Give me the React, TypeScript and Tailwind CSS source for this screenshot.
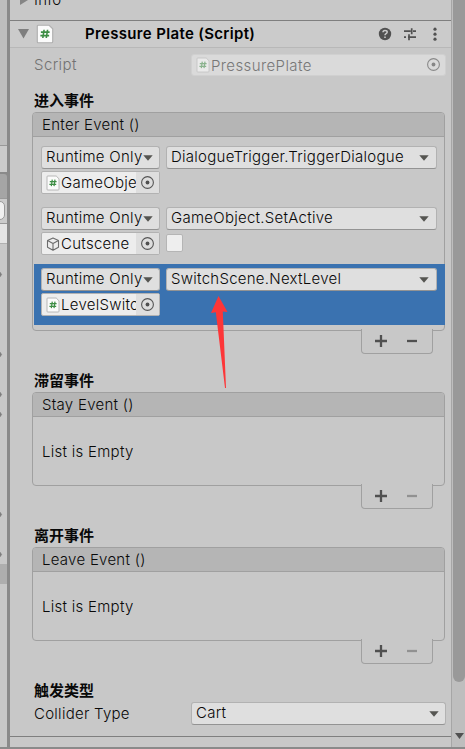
import type { ReactNode } from "react";

function Caret({ className = "" }: { className?: string }) {
  return (
    <svg className={`shrink-0 ${className}`} width="10" height="6" viewBox="0 0 10 6">
      <path d="M0.3 0.3H9.7L5 5.8Z" fill="#555551" />
    </svg>
  );
}

function ScriptIcon({ large = false }: { large?: boolean }) {
  return (
    <svg className="shrink-0" width={large ? 18 : 14} height={large ? 20 : 16} viewBox="0 0 14 16" preserveAspectRatio="none">
      <path d="M1.8 1H10.2L13 3.8V14.2Q13 15 12.2 15H1.8Q1 15 1 14.2V1.8Q1 1 1.8 1Z" fill="#fbfbfb" stroke="#b0b0b0" strokeWidth="0.9" />
      <path d="M6.3 4.6L5.3 11.2M9 4.6L8 11.2M3.8 6.5H10.6M3.4 9.3H10.2" stroke="#3e8e45" strokeWidth="1.25" fill="none" />
    </svg>
  );
}

function CubeIcon() {
  return (
    <svg className="shrink-0" width="14" height="16" viewBox="0 0 14 16">
      <path d="M7 2L12.5 4.6V11.2L7 14.2L1.5 11.2V4.6ZM1.5 4.6L7 7.4L12.5 4.6M7 7.4V14.2" fill="none" stroke="#6c6c6c" strokeWidth="1.1" strokeLinejoin="round" />
    </svg>
  );
}

function Target() {
  return (
    <svg className="shrink-0" width="14" height="14" viewBox="0 0 14 14">
      <circle cx="6.5" cy="6.5" r="5.9" fill="none" stroke="#555" strokeWidth="1.1" />
      <circle cx="6.5" cy="6.5" r="1.9" fill="#505050" />
    </svg>
  );
}

function Dropdown({ label, className }: { label: string; className: string }) {
  return (
    <div className={`flex items-center rounded-[3px] border border-[#b2b2b2] border-b-[#939393] bg-[#dfdfdf] pl-1 ${className}`}>
      <span className="mb-px min-w-0 flex-1 overflow-hidden whitespace-nowrap leading-5">{label}</span>
      <Caret className="mr-[6px]" />
    </div>
  );
}

function ObjectField({ icon, label }: { icon: ReactNode; label: string }) {
  return (
    <div className="flex h-[23px] w-[119px] items-stretch overflow-hidden rounded-[2px] border border-[#b2b2b2] bg-[#ededed]">
      <div className="flex w-[94px] items-center overflow-hidden pl-1 whitespace-nowrap">
        {icon}
        <span className="ml-[1px] mt-px leading-5">{label}</span>
      </div>
      <div className="flex flex-1 items-center bg-[#dedede] pl-[5px]">
        <Target />
      </div>
    </div>
  );
}

function EventRow({ icon, object, method, checkbox = false, selected = false }: { icon: ReactNode; object: string; method: string; checkbox?: boolean; selected?: boolean }) {
  return (
    <div className={`ml-px h-[61px] pl-[7px] pt-1 ${selected ? "-mr-px bg-[#3a72b0]" : ""}`}>
      <div className="flex gap-[6px]">
        <Dropdown label="Runtime Only" className="h-[23px] w-[119px]" />
        <Dropdown label={method} className="h-[23px] w-[271px] [&>svg]:mr-[7px]" />
      </div>
      <div className="mt-[2px] flex gap-[6px]">
        <ObjectField icon={icon} label={object} />
        {checkbox && <span className="mt-[2px] h-[18px] w-[17px] rounded-[2px] border border-[#b5b5b5] bg-[#eeeeee]" />}
      </div>
    </div>
  );
}

function EventList({ heading, title, children }: { heading: string; title: string; children?: ReactNode }) {
  return (
    <section>
      <h3 className="ml-6 h-[20px] text-[15px] font-bold leading-[22px] tracking-normal">{heading}</h3>
      <div className="ml-[22px] mt-[2px] w-[413px] rounded-[4px] border border-[#a0a0a0]">
        <div className="h-6 rounded-t-[3px] border-b border-[#a0a0a0] bg-[#b5b5b5] pl-[9px] leading-[24px]">{title}</div>
        {children ? <div className="h-[193px] pt-[5px]">{children}</div> : <div className="h-[68px] pl-[9px] pt-[25px] leading-[20px]">List is Empty</div>}
      </div>
      <div className="relative -mt-[2px] ml-[351px] flex h-[25px] w-[72px] items-center rounded-b-[4px] border border-t-0 border-[#a0a0a0] bg-[#c8c8c8] pl-[13px]">
        <svg width="12" height="12" viewBox="0 0 12 12">
          <path d="M0 6H12M6 0V12" stroke="#505050" strokeWidth="2.3" />
        </svg>
        <svg className="ml-5" width="10" height="12" viewBox="0 0 10 12">
          <path d="M0 6H10" stroke={children ? "#505050" : "#919191"} strokeWidth="2.3" />
        </svg>
      </div>
    </section>
  );
}

function Hierarchy() {
  return (
    <aside className="relative flex w-[7px] shrink-0 flex-col overflow-hidden bg-[#c8c8c8]">
      <div className="h-[146px] shrink-0 border-b border-[#999] bg-[#bebebe]" />
      <div className="h-[26px] shrink-0 bg-[#cbcbcb]" />
      <div className="h-[26px] shrink-0 bg-[#8a8a8a] pt-[2px]">
        <div className="h-6 rounded-tr-[3px] bg-[#a5a5a5]" />
      </div>
      <div className="h-[26px] shrink-0 border-y border-[#999] bg-[#cbcbcb] pt-[2px]">
        <div className="-ml-2 h-[19px] w-[13px] rounded-r-[5px] border border-[#999] bg-[#f0f0f0]" />
      </div>
      <div className="h-[20px] shrink-0 border-b border-[#b0b0b0] bg-[#e4e4e4]" />
      <div className="h-[320px] shrink-0" />
      <div className="h-5 shrink-0 bg-[#aeaeae]" />
      <svg className="absolute left-0 top-0" width="7" height="749">
        {[274.5, 354.5, 394.5, 414.5, 514.5, 554.5].map((y) => (
          <path key={y} d={`M0 ${y - 2.2}L1.6 ${y}L0 ${y + 2.2}Z`} fill="#7e7e7e" stroke="#7e7e7e" strokeWidth="0.8" />
        ))}
      </svg>
    </aside>
  );
}

export default function App() {
  return (
    <div className="relative flex h-[749px] w-[465px] flex-col overflow-hidden bg-[#c8c8c8] font-['Inter','Noto_Sans_CJK_SC',sans-serif] text-[15px] font-[360] tracking-[0.27px] text-[#090909]">
      <div className="flex h-[747px] shrink-0">
        <Hierarchy />
        <div className="w-[3px] shrink-0 bg-[#8a8a8a]" />
        <main className="w-[441px] shrink-0">
          <div className="flex h-5 overflow-hidden">
            <svg className="ml-[10px] -mt-[5px]" width="8" height="10">
              <path d="M0 0L8 5L0 10Z" fill="#858585" />
            </svg>
            <span className="-mt-[10px] ml-[6px] h-5 leading-5">Info</span>
          </div>
          <header className="flex h-7 items-center border-b border-t border-b-[#b8b8b8] border-t-[#7f7f7f] bg-[#cbcbcb]">
            <svg className="ml-2 shrink-0" width="11" height="10">
              <path d="M0 0H11L5.5 9.5Z" fill="#7e7e7e" />
            </svg>
            <span className="ml-[7px]"><ScriptIcon large /></span>
            <h2 className="ml-[31px] w-[293px] pt-px font-semibold tracking-[0.34px] text-black">Pressure Plate (Script)</h2>
            <svg width="64" height="16" viewBox="0 0 64 16">
              <circle cx="7" cy="8" r="6.2" fill="#515151" />
              <path d="M5 6.3Q5 4.5 7 4.5Q9.2 4.5 9.2 6.1Q9.2 7 8.1 7.6Q7 8.2 7 9.2M7 10.5V12" stroke="#cbcbcb" strokeWidth="1.5" fill="none" />
              <path d="M26 5.2H32.7M35 5.2H38M33.7 2.2V8.2M26 11.2H28M30 11.2H38M31 8.2V14.2" stroke="#515151" strokeWidth="1.7" fill="none" />
              <circle cx="57" cy="3.2" r="1.6" fill="#515151" />
              <circle cx="57" cy="8.2" r="1.6" fill="#515151" />
              <circle cx="57" cy="13.2" r="1.6" fill="#515151" />
            </svg>
          </header>
          <div className="flex h-[42px] pt-[6px]">
            <span className="w-[181px] shrink-0 pl-6 leading-[22px] tracking-[0.4px] text-[#727272]">Script</span>
            <div className="flex h-[22px] w-[255px] items-center rounded-[3px] border border-[#d0d0d0] bg-[#dadada] pl-1">
              <span className="flex opacity-50"><ScriptIcon /></span>
              <span className="ml-px mt-px flex-1 leading-[22px] tracking-[0.4px] text-[#777]">PressurePlate</span>
              <span className="mr-1 opacity-60"><Target /></span>
            </div>
          </div>
          <div className="h-[280px]">
            <EventList heading="进入事件" title="Enter Event ()">
              <EventRow icon={<ScriptIcon />} object="GameObject" method="DialogueTrigger.TriggerDialogue" />
              <EventRow icon={<CubeIcon />} object="Cutscene" method="GameObject.SetActive" checkbox />
              <EventRow icon={<ScriptIcon />} object="LevelSwitch" method="SwitchScene.NextLevel" selected />
            </EventList>
          </div>
          <div className="h-[155px]">
            <EventList heading="滞留事件" title="Stay Event ()" />
          </div>
          <div className="h-[155px]">
            <EventList heading="离开事件" title="Leave Event ()" />
          </div>
          <h3 className="ml-6 h-5 font-bold leading-[22px] tracking-normal">触发类型</h3>
          <div className="mt-[2px] flex h-[35px] border-b border-[#7f7f7f]">
            <span className="w-[181px] pl-6 leading-6">Collider Type</span>
            <Dropdown label="Cart" className="h-[23px] w-[255px]" />
          </div>
        </main>
        <div className="flex w-[14px] shrink-0 flex-col border-l border-[#a6a6a6] bg-[#bebebe] pl-px">
          <div className="h-[682px] rounded-b-[6px] bg-[#999]" />
          <svg className="ml-[2px] mt-[51px]" width="9" height="6">
            <path d="M0 0H9L4.5 6Z" fill="#515151" />
          </svg>
        </div>
      </div>
      <div className="h-[2px] shrink-0 bg-[#8a8a8a]" />
      <svg className="absolute left-[211px] top-[296px]" width="17" height="93">
        <path d="M7.5 0L16.5 16L11.8 15.5L15 92H14L4.8 16.2L0 17Z" fill="#fd3638" />
      </svg>
    </div>
  );
}
